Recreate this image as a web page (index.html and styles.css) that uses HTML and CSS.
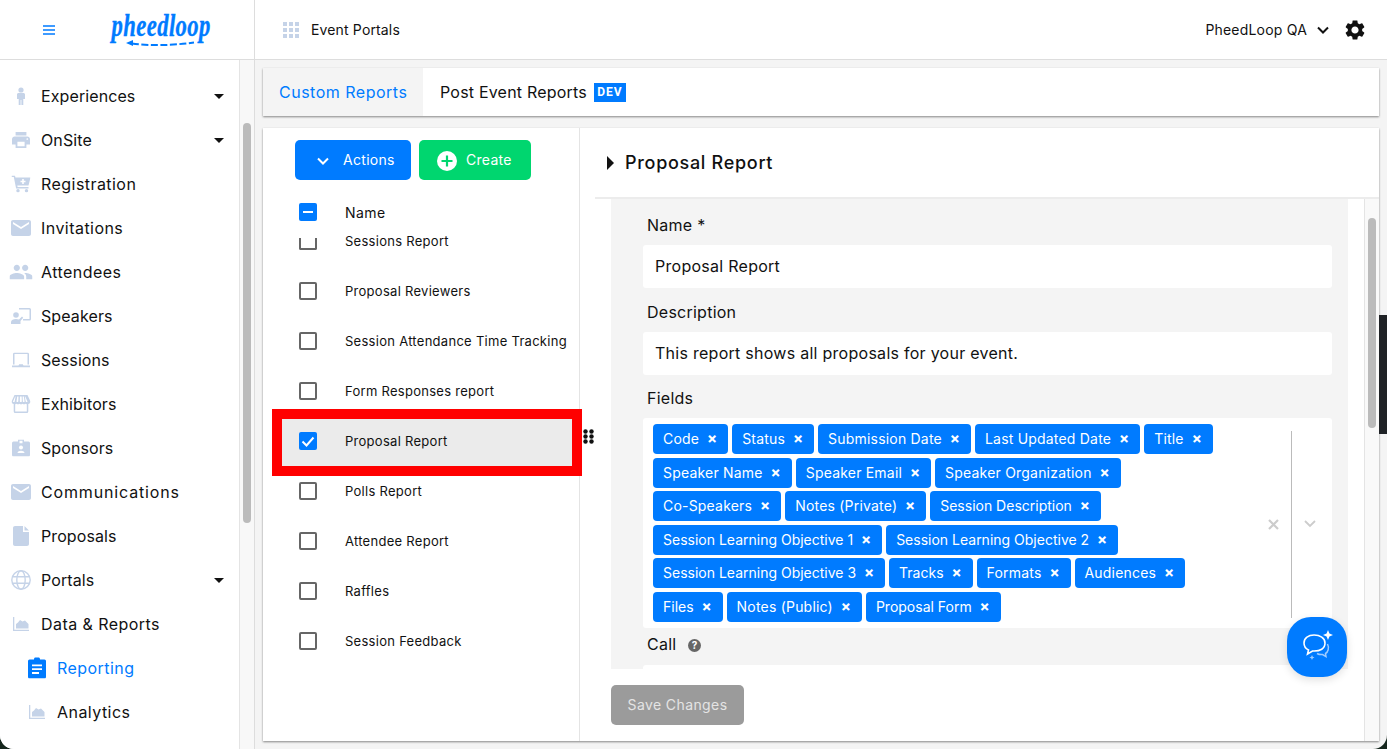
FILE: index.html
```html
<!DOCTYPE html>
<html>
<head>
    <title>PheedLoop - Reporting</title>
    <link rel="stylesheet" href="styles.css">
</head>
<body>
<div class="app">
    <header class="topbar">
        <div class="topbar-left">
            <svg class="hamburger" width="12" height="10" viewBox="0 0 12 10"><path d="M0 1h12M0 5h12M0 9h12" stroke="#007bff" stroke-width="1.6"/></svg>
            <div class="logo">
                <span class="logo-text">pheedloop</span>
                <svg class="logo-arrow" width="70" height="8" viewBox="0 0 70 8"><path d="M6 3.5c18 2.5 40 2 62-1" fill="none" stroke="#007bff" stroke-width="2" stroke-dasharray="7 2.5"/><path d="M0 3l7-3v6z" fill="#007bff"/></svg>
            </div>
        </div>
        <div class="topbar-main">
            <svg class="apps-icon" width="16" height="16" viewBox="0 0 16 16" fill="#c5d3e8"><path d="M0 0h4v4H0zM6 0h4v4H6zM12 0h4v4h-4zM0 6h4v4H0zM6 6h4v4H6zM12 6h4v4h-4zM0 12h4v4H0zM6 12h4v4H6zM12 12h4v4h-4z"/></svg>
            <span class="topbar-title">Event Portals</span>
            <span class="account">PheedLoop QA</span>
            <svg class="account-chevron" width="12" height="8" viewBox="0 0 12 8"><path d="M1 1.5l5 5 5-5" fill="none" stroke="#111" stroke-width="2"/></svg>
            <svg class="gear" width="24" height="24" viewBox="0 0 24 24"><path fill="#111" d="M19.14 12.94c.04-.3.06-.61.06-.94 0-.32-.02-.64-.07-.94l2.03-1.58c.18-.14.23-.41.12-.61l-1.92-3.32c-.12-.22-.37-.29-.59-.22l-2.39.96c-.5-.38-1.03-.7-1.62-.94l-.36-2.54c-.04-.24-.24-.41-.48-.41h-3.84c-.24 0-.43.17-.47.41l-.36 2.54c-.59.24-1.13.57-1.62.94l-2.39-.96c-.22-.08-.47 0-.59.22L2.74 8.87c-.12.21-.08.47.12.61l2.03 1.58c-.05.3-.09.63-.09.94s.02.64.07.94l-2.03 1.58c-.18.14-.23.41-.12.61l1.92 3.32c.12.22.37.29.59.22l2.39-.96c.5.38 1.03.7 1.62.94l.36 2.54c.05.24.24.41.48.41h3.84c.24 0 .44-.17.47-.41l.36-2.54c.59-.24 1.13-.56 1.62-.94l2.39.96c.22.08.47 0 .59-.22l1.92-3.32c.12-.22.07-.47-.12-.61l-2.01-1.58zM12 15.6c-1.98 0-3.6-1.62-3.6-3.6s1.62-3.6 3.6-3.6 3.6 1.62 3.6 3.6-1.62 3.6-3.6 3.6z"/></svg>
        </div>
    </header>

    <div class="content">
        <nav class="sidebar">
            <div class="nav-item">
                <svg class="nav-icon" width="22" height="22" viewBox="0 0 22 22"><circle cx="11" cy="5" r="2.6"/><path d="M7 9.5c0-1 .8-1.500 1.600-1.500h4.800c.8 0 1.600.5 1.600 1.500V14h-1.700v6h-1.900v-5h-.8v5H8.700v-6H7z"/></svg>
                <span>Experiences</span><i class="caret"></i>
            </div>
            <div class="nav-item">
                <svg class="nav-icon" width="18" height="18" viewBox="2 3 20 18"><path d="M19 8H5c-1.660 0-3 1.340-3 3v6h4v4h12v-4h4v-6c0-1.660-1.340-3-3-3zm-3 11H8v-5h8v5zm3-7c-.55 0-1-.45-1-1s.45-1 1-1 1 .45 1 1-.45 1-1 1zm-1-9H6v4h12V3z"/></svg>
                <span>OnSite</span><i class="caret"></i>
            </div>
            <div class="nav-item nav-item-wide">
                <svg class="nav-icon" width="19" height="17" viewBox="0 0 19 17"><path d="M0 0h3.400l.6 2h15l-2 8H5.800l.3 1.500H17V13H4.600L2.300 1.500H0z"/><circle cx="6.500" cy="15.300" r="1.700"/><circle cx="15" cy="15.300" r="1.700"/><path fill="#fff" d="M10.700 3.500h1.600v1.700H14v1.500h-1.700v1.700h-1.600V6.700H9V5.200h1.700z"/></svg>
                <span>Registration</span>
            </div>
            <div class="nav-item nav-item-wide">
                <svg class="nav-icon" width="20" height="16" viewBox="2 4 20 16"><path d="M20 4H4c-1.100 0-2 .9-2 2v12c0 1.100.9 2 2 2h16c1.100 0 2-.9 2-2V6c0-1.100-.9-2-2-2zm0 4l-8 5-8-5V6l8 5 8-5v2z"/></svg>
                <span>Invitations</span>
            </div>
            <div class="nav-item nav-item-wide">
                <svg class="nav-icon" width="23" height="16" viewBox="1 5 22 14"><path d="M16 11c1.660 0 2.990-1.340 2.990-3S17.660 5 16 5c-1.660 0-3 1.340-3 3s1.340 3 3 3zm-8 0c1.660 0 2.990-1.340 2.990-3S9.660 5 8 5C6.340 5 5 6.340 5 8s1.340 3 3 3zm0 2c-2.330 0-7 1.170-7 3.500V19h14v-2.500c0-2.330-4.670-3.500-7-3.500zm8 0c-.29 0-.62.02-.97.05 1.160.84 1.970 1.970 1.970 3.450V19h6v-2.500c0-2.330-4.670-3.500-7-3.500z"/></svg>
                <span>Attendees</span>
            </div>
            <div class="nav-item">
                <svg class="nav-icon" width="20" height="16" viewBox="0 0 20 16"><path d="M8 0h10.500A1.500 1.500 0 0 1 20 1.500V11a1.500 1.500 0 0 1-1.500 1.500H12v-1.400h6.500V1.500H8z"/><circle cx="5" cy="7" r="2.800"/><path d="M0 16v-2c0-1.800 2.500-3 5-3 1 0 2 .2 3 .6l3-3 1.200 1.200L9.500 13v3z"/></svg>
                <span>Speakers</span>
            </div>
            <div class="nav-item">
                <svg class="nav-icon" width="18" height="15" viewBox="0 0 18 15"><path d="M2.500 0h13A1.500 1.500 0 0 1 17 1.500V12H15.500V1.500h-13V12H1V1.500A1.500 1.500 0 0 1 2.500 0z"/><path d="M0 13h6.500l.7-1.200h3.600l.7 1.200H18v2H0z"/></svg>
                <span>Sessions</span>
            </div>
            <div class="nav-item">
                <svg class="nav-icon" width="19" height="18" viewBox="0 0 19 18"><path d="M3 0h13l3 6.500C19 8 18 9 16.800 9v7.500a1.500 1.500 0 0 1-1.500 1.500H3.700a1.500 1.500 0 0 1-1.500-1.500V9C1 9 0 8 0 6.500zm.700 1.500L1.500 6.500c0 .8 1.600.8 1.700 0l.9-5zm2 0l-.7 5c0 .8 1.700.8 1.800 0l.2-5zm2.700 0l-.1 5c0 .8 2 .8 2 0l-.1-5zm2.700 0l.2 5c.1.8 1.800.8 1.800 0l-.7-5zm2.200 0l.9 5c.1.8 1.800.8 1.800 0l-2.300-5zM3.700 9.300v7.200h11.600V9.300c-.5 0-1-.2-1.400-.5-.8.7-2 .7-2.700 0-.9.700-2.500.7-3.400 0-.7.700-1.900.7-2.700 0-.4.300-.9.500-1.400.5z"/></svg>
                <span>Exhibitors</span>
            </div>
            <div class="nav-item">
                <svg class="nav-icon" width="18" height="17" viewBox="0 0 18 17"><path d="M1.500 2H6V0h6v2h4.500A1.500 1.500 0 0 1 18 3.500v12a1.500 1.500 0 0 1-1.500 1.500h-15A1.500 1.500 0 0 1 0 15.500v-12A1.500 1.500 0 0 1 1.500 2z"/><path fill="#fff" d="M7.500 1.300h3v2.500h-3z"/><circle cx="9" cy="8" r="2" fill="#fff"/><path fill="#fff" d="M5.500 13.500c0-1.500 2-2.300 3.500-2.300s3.500.8 3.500 2.300z"/></svg>
                <span>Sponsors</span>
            </div>
            <div class="nav-item nav-item-widest">
                <svg class="nav-icon" width="20" height="16" viewBox="2 4 20 16"><path d="M20 4H4c-1.100 0-2 .9-2 2v12c0 1.100.9 2 2 2h16c1.100 0 2-.9 2-2V6c0-1.100-.9-2-2-2zm0 4l-8 5-8-5V6l8 5 8-5v2z"/></svg>
                <span>Communications</span>
            </div>
            <div class="nav-item">
                <svg class="nav-icon" width="16" height="20" viewBox="4 2 16 20"><path d="M6 2h8v6h6v12c0 1.100-.9 2-2 2H6c-1.100 0-2-.9-2-2V4c0-1.100.9-2 2-2zm9.500 0L20 6.500h-4.500z"/></svg>
                <span>Proposals</span>
            </div>
            <div class="nav-item">
                <svg class="nav-icon nav-icon-line" width="20" height="20" viewBox="0 0 20 20"><circle cx="10" cy="10" r="9.200"/><ellipse cx="10" cy="10" rx="4.200" ry="9.200"/><path d="M1.500 6.800h17M1.500 13.200h17"/></svg>
                <span>Portals</span><i class="caret"></i>
            </div>
            <div class="nav-item nav-item-wide">
                <svg class="nav-icon" width="16" height="14" viewBox="0 0 16 14"><path d="M0 0h1.300v12.700H16V14H0z"/><path d="M3 11.500V7l2-1.500L7 3l2.500 1.500L12 3.500 15.500 7v4.500z"/></svg>
                <span>Data &amp; Reports</span>
            </div>
            <div class="nav-item nav-item-wide nav-sub nav-active">
                <svg class="nav-icon" width="18" height="21" viewBox="0 0 18 21"><path d="M1.500 2H6a3 3 0 0 1 6 0h4.500A1.500 1.500 0 0 1 18 3.500v16a1.500 1.500 0 0 1-1.500 1.500h-15A1.500 1.500 0 0 1 0 19.500v-16A1.500 1.500 0 0 1 1.500 2z" fill="#007bff"/><path d="M4 7h10v1.800H4zM4 10.800h10v1.800H4zM4 14.600h7v1.800H4z" fill="#fff"/></svg>
                <span>Reporting</span>
            </div>
            <div class="nav-item nav-item-wide nav-sub">
                <svg class="nav-icon" width="16" height="14" viewBox="0 0 16 14"><path d="M0 0h1.300v12.700H16V14H0z"/><path d="M3 11.500V7l2-1.500L7 3l2.500 1.500L12 3.500 15.500 7v4.500z"/></svg>
                <span>Analytics</span>
            </div>
        </nav>
        <div class="sidebar-track"><div class="sidebar-thumb"></div></div>

        <main class="main">
            <div class="tabs">
                <div class="tab tab-active">Custom Reports</div>
                <div class="tab">Post Event Reports <span class="dev-badge">DEV</span></div>
            </div>

            <div class="panel">
                <section class="reports">
                    <div class="reports-actions">
                        <button class="btn btn-blue">
                            <svg width="12" height="8" viewBox="0 0 12 8"><path d="M1 1.500l5 5 5-5" fill="none" stroke="#fff" stroke-width="2"/></svg>
                            Actions
                        </button>
                        <button class="btn btn-green">
                            <svg width="20" height="20" viewBox="0 0 20 20"><circle cx="10" cy="10" r="10" fill="#fff"/><path d="M10 4.500v11M4.500 10h11" stroke="#00d66f" stroke-width="2.200"/></svg>
                            Create
                        </button>
                    </div>
                    <div class="reports-head">
                        <span class="check check-on"><i class="check-dash"></i></span>
                        <span>Name</span>
                    </div>
                    <div class="highlight"></div>
                    <svg class="grip" width="11" height="15" viewBox="0 0 11 15" fill="#111"><circle cx="2.500" cy="2.500" r="2.200"/><circle cx="8.500" cy="2.500" r="2.200"/><circle cx="2.500" cy="7.500" r="2.200"/><circle cx="8.500" cy="7.500" r="2.200"/><circle cx="2.500" cy="12.500" r="2.200"/><circle cx="8.500" cy="12.500" r="2.200"/></svg>
                    <div class="report-list">
                        <div class="report-row report-row-cut"><span class="check check-cut"></span><span>Sessions Report</span></div>
                        <div class="report-row"><span class="check"></span><span>Proposal Reviewers</span></div>
                        <div class="report-row"><span class="check"></span><span>Session Attendance Time Tracking</span></div>
                        <div class="report-row"><span class="check"></span><span>Form Responses report</span></div>
                        <div class="report-row">
                            <span class="check check-on"><svg width="14" height="11" viewBox="0 0 14 11"><path d="M1.500 5.500l4 4 7-8" fill="none" stroke="#fff" stroke-width="2"/></svg></span>
                            <span>Proposal Report</span>
                        </div>
                        <div class="report-row"><span class="check"></span><span>Polls Report</span></div>
                        <div class="report-row"><span class="check"></span><span>Attendee Report</span></div>
                        <div class="report-row"><span class="check"></span><span>Raffles</span></div>
                        <div class="report-row"><span class="check"></span><span>Session Feedback</span></div>
                    </div>
                </section>

                <section class="detail">
                    <div class="detail-head">
                        <i class="detail-arrow"></i>
                        <h2>Proposal Report</h2>
                    </div>
                    <div class="detail-body">
                        <div class="detail-main">
                            <div class="form-scroll">
                                <label class="field-label">Name *</label>
                                <div class="input">Proposal Report</div>
                                <label class="field-label">Description</label>
                                <div class="input">This report shows all proposals for your event.</div>
                                <label class="field-label">Fields</label>
                                <div class="select-box">
                                    <div class="tags">
                                        <span class="tag">Code<b>×</b></span>
                                        <span class="tag">Status<b>×</b></span>
                                        <span class="tag">Submission Date<b>×</b></span>
                                        <span class="tag">Last Updated Date<b>×</b></span>
                                        <span class="tag">Title<b>×</b></span>
                                        <span class="tag">Speaker Name<b>×</b></span>
                                        <span class="tag">Speaker Email<b>×</b></span>
                                        <span class="tag">Speaker Organization<b>×</b></span>
                                        <span class="tag">Co-Speakers<b>×</b></span>
                                        <span class="tag">Notes (Private)<b>×</b></span>
                                        <span class="tag tag-tight">Session Description<b>×</b></span>
                                        <span class="tag tag-tight">Session Learning Objective 1<b>×</b></span>
                                        <span class="tag tag-tight">Session Learning Objective 2<b>×</b></span>
                                        <span class="tag tag-tight">Session Learning Objective 3<b>×</b></span>
                                        <span class="tag tag-tight">Tracks<b>×</b></span>
                                        <span class="tag">Formats<b>×</b></span>
                                        <span class="tag">Audiences<b>×</b></span>
                                        <span class="tag tag-tight">Files<b>×</b></span>
                                        <span class="tag">Notes (Public)<b>×</b></span>
                                        <span class="tag tag-tight">Proposal Form<b>×</b></span>
                                    </div>
                                    <div class="select-controls">
                                        <svg width="11" height="11" viewBox="0 0 11 11"><path d="M1 1l9 9M10 1l-9 9" stroke="#ccc" stroke-width="2.200"/></svg>
                                        <i class="select-sep"></i>
                                        <svg width="12" height="8" viewBox="0 0 12 8"><path d="M1 1l5 5 5-5" fill="none" stroke="#ccc" stroke-width="1.800"/></svg>
                                    </div>
                                </div>
                                <label class="field-label field-label-call">Call <span class="help">?</span></label>
                                <div class="input"></div>
                            </div>
                            <button class="btn-save">Save Changes</button>
                        </div>
                        <div class="detail-track"><div class="detail-thumb"></div></div>
                    </div>
                </section>
            </div>
        </main>
    </div>

    <div class="edge-strip"></div>
    <button class="chat-btn">
        <svg width="36" height="36" viewBox="0 0 36 36" fill="none"><path d="M15 6c-5.500 0-10 2.800-10 8 0 3.500 2 5.800 4.500 7l-1 4 5-3c8 .5 12.500-2.500 12.500-8 0-5-5-8-11-8z" stroke="#fff" stroke-width="1.600"/><path d="M28.500 15c2 4 .5 8-2 9.500l.5 3-3.500-2c-2 .3-4-.2-5.500-1" stroke="#9ecbff" stroke-width="1.500"/><path d="M29 1l1.400 3.600L34 6l-3.600 1.400L29 11l-1.400-3.600L24 6l3.600-1.400z" fill="#fff"/><path d="M13 26l.8 1.700 1.700.8-1.700.8-.8 1.700-.8-1.700-1.700-.8 1.700-.8z" fill="#9ecbff"/></svg>
    </button>
</div>
</body>
</html>
```

FILE: styles.css
```css
* {
    box-sizing: border-box;
}

html, body {
    height: 100%;
}

body {
    margin: 0;
    background-color: #15261d;
    color: #111;
    font-family: Inter, "Noto Sans", sans-serif;
    overflow: hidden;
}

.app {
    position: relative;
    height: 100vh;
    display: flex;
    flex-direction: column;
    background-color: #f4f4f4;
    border-radius: 0 0 14px 14px;
    overflow: hidden;
}

/* top bar */
.topbar {
    flex: 0 0 60px;
    display: flex;
    background-color: #fff;
    border-bottom: 1px solid #ddd;
}

.topbar-left {
    width: 255px;
    display: flex;
    align-items: center;
    padding-left: 43px;
    border-right: 1px solid #ddd;
}

.hamburger {
    flex: none;
    margin-right: 56px;
}

.logo {
    width: 100px;
    display: flex;
    flex-direction: column;
    align-items: center;
    color: #007bff;
}

.logo-text {
    display: inline-block;
    font-family: "Liberation Serif", serif;
    font-style: italic;
    font-weight: 700;
    font-size: 31px;
    line-height: 27px;
    letter-spacing: 0.6px;
    -webkit-text-stroke: 0.4px #007bff;
    transform: scaleX(0.73);
}

.logo-arrow {
    margin-top: 1px;
}

.topbar-main {
    flex: 1;
    display: flex;
    align-items: center;
    padding-left: 28px;
    padding-right: 20px;
    font-size: 14px;
}

.topbar-title {
    margin-left: 12px;
    letter-spacing: 0.15px;
}

.account {
    margin-left: auto;
    letter-spacing: 0.2px;
}

.account-chevron {
    margin-left: 10px;
    margin-right: 14px;
}

/* sidebar */
.content {
    flex: 1;
    display: flex;
    min-height: 0;
}

.sidebar {
    width: 240px;
    padding-top: 14px;
    background-color: #fff;
    border-right: 1px solid #e4e4e4;
}

.nav-item {
    position: relative;
    height: 44px;
    display: flex;
    align-items: center;
    padding-left: 41px;
    font-size: 16px;
    letter-spacing: 0.1px;
    color: #111;
}

.nav-item-wide {
    letter-spacing: 0.45px;
}

.nav-item-widest {
    letter-spacing: 0.85px;
}

.nav-icon {
    position: absolute;
    left: 21px;
    top: 50%;
    transform: translate(-50%, -50%);
    fill: #c5d3e8;
}

.nav-icon-line {
    fill: none;
    stroke: #c5d3e8;
    stroke-width: 1.4;
}

.nav-sub {
    padding-left: 57px;
}

.nav-sub .nav-icon {
    left: 37px;
}

.nav-active {
    color: #007bff;
}

.caret {
    position: absolute;
    left: 214px;
    top: 20px;
    border-left: 5px solid transparent;
    border-right: 5px solid transparent;
    border-top: 5px solid #111;
}

.sidebar-track {
    width: 15px;
    padding: 63px 3px 0;
    background-color: #f8f8f8;
    border-right: 1px solid #ddd;
}

.sidebar-thumb {
    width: 8px;
    height: 400px;
    border-radius: 4px;
    background-color: #bbb;
}

/* main */
.main {
    flex: 1;
    min-width: 0;
    padding: 8px;
}

.tabs {
    height: 48px;
    display: flex;
    background-color: #fff;
    box-shadow: 0 1px 2px rgba(0, 0, 0, 0.45);
    font-size: 16px;
}

.tab {
    display: flex;
    align-items: center;
    padding: 0 17px;
    letter-spacing: 0.2px;
    white-space: nowrap;
}

.tab-active {
    width: 160px;
    padding: 0 0 0 16px;
    background-color: #f4f4f4;
    color: #007bff;
    letter-spacing: 0.5px;
}

.dev-badge {
    width: 32px;
    height: 19px;
    margin-left: 7px;
    display: flex;
    align-items: center;
    justify-content: center;
    background-color: #007bff;
    color: #fff;
    font-family: Roboto, sans-serif;
    font-weight: 700;
    font-size: 12px;
    letter-spacing: 1px;
}

.panel {
    height: 613px;
    margin-top: 12px;
    display: flex;
    background-color: #fff;
    box-shadow: 0 1px 2px rgba(0, 0, 0, 0.45);
}

/* report list */
.reports {
    position: relative;
    width: 317px;
    border-right: 1px solid #e4e4e4;
}

.reports-actions {
    display: flex;
    gap: 8px;
    padding: 12px 0 0 32px;
}

.btn {
    height: 40px;
    display: flex;
    align-items: center;
    padding-bottom: 2px;
    border: 0;
    border-radius: 5px;
    color: #fff;
    font-family: inherit;
    font-size: 14px;
    letter-spacing: 0.3px;
}

.btn svg {
    position: relative;
    top: 1px;
}

.btn-blue {
    width: 116px;
    padding-left: 22px;
    gap: 14px;
    background-color: #007bff;
}

.btn-green {
    width: 112px;
    padding-left: 18px;
    gap: 9px;
    background-color: #00d66f;
}

.reports-head {
    height: 32px;
    margin-top: 16px;
    display: flex;
    align-items: center;
    padding-left: 36px;
    gap: 28px;
    font-size: 14px;
    letter-spacing: 0.45px;
}

.check {
    flex: none;
    width: 18px;
    height: 18px;
    display: flex;
    align-items: center;
    justify-content: center;
    border: 2px solid #666;
    border-radius: 2px;
    background-color: #fff;
}

.check-on {
    border: 0;
    background-color: #007bff;
}

.check-dash {
    width: 10px;
    height: 2px;
    background-color: #fff;
}

.check-cut {
    height: 12px;
    margin-top: 6px;
    border-top: 0;
    border-radius: 0 0 2px 2px;
}

.highlight {
    position: absolute;
    left: 9px;
    top: 281px;
    width: 310px;
    height: 67px;
    border: 10px solid #f00;
    background-color: #ebebeb;
}

.grip {
    position: absolute;
    left: 320px;
    top: 301px;
    z-index: 1;
}

.report-list {
    position: relative;
    height: 450px;
    overflow: hidden;
}

.report-row {
    height: 50px;
    display: flex;
    align-items: center;
    padding-left: 36px;
    gap: 28px;
    font-size: 13px;
    letter-spacing: 0.28px;
}

.report-row-cut {
    margin-top: -12px;
}

/* report detail */
.detail {
    flex: 1;
    min-width: 0;
    display: flex;
    flex-direction: column;
}

.detail-head {
    height: 71px;
    margin-left: 15px;
    display: flex;
    align-items: center;
    padding-left: 12px;
    gap: 11px;
    border-bottom: 2px solid #ececec;
}

.detail-arrow {
    border-top: 7.5px solid transparent;
    border-bottom: 7.5px solid transparent;
    border-left: 7px solid #111;
}

.detail-head h2 {
    margin: 0;
    font-size: 18px;
    font-weight: 500;
    letter-spacing: 0.7px;
}

.detail-body {
    flex: 1;
    min-height: 0;
    display: flex;
}

.detail-main {
    flex: 1;
    min-width: 0;
    padding: 0 16px 0 31px;
}

.form-scroll {
    height: 470px;
    padding: 14px 16px 0 32px;
    background-color: #f4f4f4;
    overflow: hidden;
}

.field-label {
    display: block;
    height: 24px;
    margin-top: 11.5px;
    margin-bottom: 8px;
    padding-left: 4px;
    font-size: 16px;
    line-height: 24px;
    letter-spacing: 0.25px;
}

.field-label:first-child {
    margin-top: 0;
}

.field-label-call {
    margin-top: 4px;
    margin-bottom: 9px;
}

.help {
    display: inline-flex;
    width: 13px;
    height: 13px;
    margin-left: 7px;
    align-items: center;
    justify-content: center;
    border-radius: 50%;
    background-color: #666;
    color: #fff;
    font-size: 10px;
    font-weight: 700;
    letter-spacing: 0;
    vertical-align: 1px;
}

.input {
    height: 43px;
    display: flex;
    align-items: center;
    padding: 0 0 1px 12px;
    border-radius: 3px;
    background-color: #fff;
    font-size: 16px;
    letter-spacing: 0.27px;
}

.select-box {
    height: 210px;
    display: flex;
    padding: 6px 0 0 10px;
    border-radius: 3px;
    background-color: #fff;
}

.tags {
    width: 580px;
    display: flex;
    flex-wrap: wrap;
    align-content: flex-start;
    gap: 3.6px 4px;
}

.tag {
    height: 30px;
    display: flex;
    align-items: center;
    padding: 0 3px 1px 10px;
    border-radius: 4px;
    background-color: #007bff;
    color: #fff;
    font-size: 14px;
    letter-spacing: 0.2px;
}

.tag-tight {
    letter-spacing: 0;
}

.tag b {
    width: 26px;
    text-align: center;
    font-size: 15px;
    letter-spacing: 0;
}

.select-controls {
    flex: 1;
    display: flex;
    align-items: center;
    padding-left: 35px;
    padding-bottom: 4px;
}

.select-sep {
    width: 1px;
    height: 187px;
    margin: 0 12px;
    background-color: #bbb;
}

.btn-save {
    width: 133px;
    height: 40px;
    margin-top: 16px;
    padding-bottom: 2px;
    border: 0;
    border-radius: 5px;
    background-color: #9b9b9b;
    color: #e4e4e4;
    font-family: inherit;
    font-size: 14px;
    letter-spacing: 0.4px;
}

.detail-track {
    width: 15px;
    padding: 19px 3px 0;
    background-color: #f9f9f9;
    border-left: 1px solid #e4e4e4;
}

.detail-thumb {
    width: 8px;
    height: 210px;
    border-radius: 4px;
    background-color: #bbb;
}

/* overlays */
.edge-strip {
    position: absolute;
    left: 1379px;
    top: 315px;
    width: 8px;
    height: 119px;
    background-color: #1f2226;
}

.chat-btn {
    position: absolute;
    left: 1287px;
    top: 617px;
    width: 60px;
    height: 60px;
    display: flex;
    align-items: center;
    justify-content: center;
    padding: 0;
    border: 0;
    border-radius: 24px;
    background-color: #007bff;
    box-shadow: 0 3px 8px rgba(0, 0, 0, 0.12);
}
```
